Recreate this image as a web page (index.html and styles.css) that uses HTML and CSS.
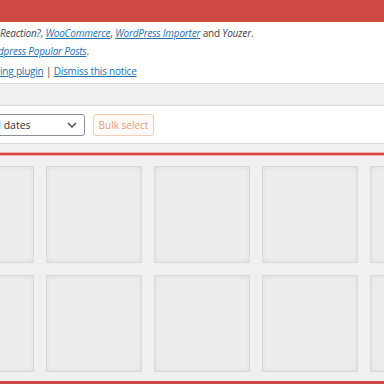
FILE: index.html
```html
<!DOCTYPE html>
<html lang="en">
<head>
    <meta charset="UTF-8">
    <title>Media Library</title>
    <link rel="stylesheet" href="styles.css">
</head>
<body>
    <div class="adminbar"></div>

    <div class="notice">
        <p class="notice-line">
            <em>Reaction?</em>, <a href="#"><em>WooCommerce</em></a>, <a href="#"><em>WordPress Importer</em></a> and <em>Youzer</em>.
        </p>
        <p class="notice-line cut-2">
            <a href="#"><em>dpress Popular Posts</em></a>.
        </p>
        <p class="notice-line notice-actions">
            <a href="#">ing plugin</a> | <a href="#">Dismiss this notice</a>
        </p>
    </div>

    <div class="media-toolbar">
        <div class="fake-select">
            <span>All dates</span>
            <svg width="10" height="6" viewBox="0 0 10 6"><path d="M1 1l4 4 4-4" fill="none" stroke="#3c434a" stroke-width="1.4"/></svg>
        </div>
        <button class="bulk-btn">Bulk select</button>
    </div>

    <div class="rule"></div>

    <div class="attachments">
        <div class="thumb"></div>
        <div class="thumb"></div>
        <div class="thumb"></div>
        <div class="thumb"></div>
        <div class="thumb"></div>
        <div class="thumb"></div>
        <div class="thumb"></div>
        <div class="thumb"></div>
        <div class="thumb"></div>
        <div class="thumb"></div>
    </div>

    <div class="footer-bar"></div>
</body>
</html>
```

FILE: styles.css
```css
body {
    margin: 0;
    background: #f0f0f1;
    font-family: "Open Sans", "Noto Sans", sans-serif;
    font-size: 10px;
    color: #3c434a;
    overflow: hidden;
    height: 384px;
}
.adminbar {
    height: 22px;
    background: #cf4a45;
}
.notice {
    background: #fff;
    height: 62px;
    box-sizing: border-box;
    padding-top: 2px;
    border-bottom: 1px solid #dcdcde;
    white-space: nowrap;
    overflow: hidden;
    letter-spacing: -0.2px;
}
.notice-line {
    margin: 0;
    line-height: 18px;
}
.notice-actions {
    margin-top: 2px;
}
.cut-2 {
    text-indent: -2px;
}
.notice a {
    color: #2271b1;
}
.media-toolbar {
    margin-top: 21px;
    background: #fff;
    height: 39px;
    box-sizing: border-box;
    border-top: 1px solid #dcdcde;
    border-bottom: 1px solid #dcdcde;
    display: flex;
    align-items: center;
    gap: 8px;
    overflow: hidden;
}
.fake-select {
    margin-left: -20px;
    width: 105px;
    height: 22px;
    box-sizing: border-box;
    border: 1px solid #8c8f94;
    border-radius: 3px;
    display: flex;
    align-items: center;
    justify-content: space-between;
    padding: 0 7px 0 8px;
    font-size: 10.5px;
    color: #2c3338;
}
.bulk-btn {
    height: 22px;
    width: 61px;
    padding: 0;
    border: 1px solid #f2cdb4;
    border-radius: 3px;
    background: #fffaf7;
    color: #df9f78;
    font-family: inherit;
    font-size: 10px;
}
.rule {
    margin-top: 9px;
    height: 2px;
    background: #e0443c;
    box-shadow: 0 0 0 1px rgba(224, 68, 60, 0.35);
}
.attachments {
    margin: 11px 0 0 -62px;
    display: grid;
    grid-template-columns: repeat(5, 96px);
    gap: 12px;
}
.thumb {
    height: 97px;
    background: #ededed;
    border: 1px solid #d9d9d9;
    box-sizing: border-box;
    box-shadow: inset 0 0 5px rgba(0, 0, 0, 0.07);
}
.footer-bar {
    margin-top: 9px;
    height: 10px;
    background: #cf4a45;
}
```
